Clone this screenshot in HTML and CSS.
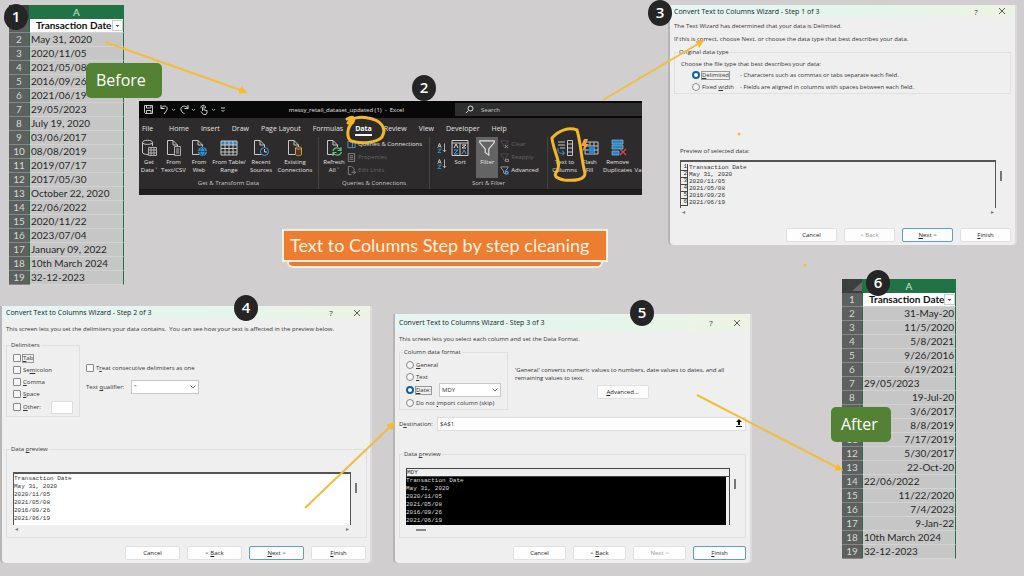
FILE: index.html
```html
<!DOCTYPE html>
<html lang="en">
<head>
<meta charset="utf-8">
<title>Text to Columns Step by step cleaning</title>
<link rel="stylesheet" href="styles.css">
</head>
<body>
<svg class="defs" aria-hidden="true">
  <symbol id="i-doc" viewBox="0 0 18 18"><path d="M9 15.500H2.500V1.500H8L12.500 6V8M8 1.500V6H12.500" fill="none" stroke="#c8c8c8"/></symbol>
  <symbol id="i-close" viewBox="0 0 8 8"><path d="M1 1L7 7M7 1L1 7" fill="none" stroke="#333" stroke-width=".8"/></symbol>
  <symbol id="i-chev" viewBox="0 0 8 8"><path d="M1.500 2.500L4 5L6.500 2.500" fill="none" stroke="#555" stroke-width=".8"/></symbol>
  <symbol id="i-drop" viewBox="0 0 9 9"><path d="M2.500 4H6.500L4.500 6Z" fill="#555"/></symbol>
  <symbol id="i-az" viewBox="0 0 12 13"><path d="M1 6L3 1L5 6M2 4.500H4" fill="none" stroke="#ddd"/><path d="M1 8H5L1 12H5" fill="none" stroke="#4c9ad4"/><path d="M9 1V11M7 9L9 11L11 9" fill="none" stroke="#ccc"/></symbol>
  <symbol id="i-funnel" viewBox="0 0 20 20"><path d="M2 2H18V4L12 11V18L8 15V11L2 4Z" fill="none" stroke="currentColor" stroke-width="1.300"/></symbol>
</svg>
<main class="slide">
  <div class="row row-top">
    <section class="step sheet-step">
      <table class="sheet">
        <thead><tr><th></th><th class="col">A</th></tr></thead>
        <tbody>
          <tr class="field"><th>1</th><td><b>Transaction Date</b><button class="filter-btn" aria-label="Filter"><svg width="9" height="9"><use href="#i-drop"/></svg></button></td></tr>
          <tr><th>2</th><td>May 31, 2020</td></tr>
          <tr><th>3</th><td>2020/11/05</td></tr>
          <tr><th>4</th><td>2021/05/08</td></tr>
          <tr><th>5</th><td>2016/09/26</td></tr>
          <tr><th>6</th><td>2021/06/19</td></tr>
          <tr><th>7</th><td>29/05/2023</td></tr>
          <tr><th>8</th><td>July 19, 2020</td></tr>
          <tr><th>9</th><td>03/06/2017</td></tr>
          <tr><th>10</th><td>08/08/2019</td></tr>
          <tr><th>11</th><td>2019/07/17</td></tr>
          <tr><th>12</th><td>2017/05/30</td></tr>
          <tr><th>13</th><td>October 22, 2020</td></tr>
          <tr><th>14</th><td>22/06/2022</td></tr>
          <tr><th>15</th><td>2020/11/22</td></tr>
          <tr><th>16</th><td>2023/07/04</td></tr>
          <tr><th>17</th><td>January 09, 2022</td></tr>
          <tr><th>18</th><td>10th March 2024</td></tr>
          <tr><th>19</th><td>32-12-2023</td></tr>
        </tbody>
      </table>
      <span class="badge badge-1">1</span>
      <span class="tag tag-before">Before</span>
    </section>

    <div class="middle">
      <section class="step">
        <div class="ribbon">
          <div class="app-bar">
            <div class="quick">
              <svg width="11" height="11" viewBox="0 0 11 11"><path d="M1.500 1.500H9.500V9.500H2.500L1.500 8.500ZM3.500 1.500V4H8V1.500M3.500 9.500V6.500H8V9.500" fill="none" stroke="#ddd" stroke-width=".9"/></svg>
              <svg width="18" height="11" viewBox="0 0 18 11"><path d="M2 1V4.500H5.500M2 4.500C5 0 9 2.500 8 5.500C7.500 7 6 8.500 5 10" fill="none" stroke="#ddd"/><path d="M13 5L14.500 6.500L16 5" fill="none" stroke="#aaa"/></svg>
              <svg width="18" height="11" viewBox="0 0 18 11"><path d="M9 1V4.500H5.500M9 4.500C6 0 1 2.500 2 6C2.500 8 4 9 5.500 9.500" fill="none" stroke="#ddd"/><path d="M13 5L14.500 6.500L16 5" fill="none" stroke="#aaa"/></svg>
              <svg width="18" height="11" viewBox="0 0 18 11"><path d="M3.500 7V3.500C3.500 2.500 5 2.500 5 3.500V6L8 6.500V9L7 10.500H4.500L2 7.500M2 4C1 1 7 0 6.500 4" fill="none" stroke="#ddd" stroke-width=".9"/><path d="M13 5L14.500 6.500L16 5" fill="none" stroke="#aaa"/></svg>
              <svg width="8" height="11" viewBox="0 0 8 11"><path d="M2 4H6M2.500 6L4 7.500L5.500 6" fill="none" stroke="#ccc"/></svg>
            </div>
            <span class="doc-name">messy_retail_dataset_updated (1) &nbsp;- &nbsp;Excel</span>
            <label class="search"><svg width="9" height="9" viewBox="0 0 9 9"><circle cx="5.500" cy="3.500" r="2.500" fill="none" stroke="#ddd"/><path d="M3.500 5.500L1 8" stroke="#ddd"/></svg><input type="text" placeholder="Search" aria-label="Search"></label>
          </div>
          <nav class="tabs">
            <a href="#">File</a><a href="#">Home</a><a href="#">Insert</a><a href="#">Draw</a><a href="#">Page Layout</a><a href="#">Formulas</a><a href="#" class="on">Data</a><a href="#">Review</a><a href="#">View</a><a href="#">Developer</a><a href="#">Help</a>
          </nav>
          <div class="tools">
            <div class="group g-get">
              <div class="items">
                <button class="tool w20"><svg viewBox="0 0 18 18"><path d="M2.500 3.500V13C2.500 15 5 15.500 8 15.500M12.500 3.500V7M2.500 3.500C2.500 .5 12.500 .5 12.500 3.500C12.500 6 2.500 6 2.500 3.500" fill="none" stroke="#c8c8c8"/><path d="M8.500 8.500H16.500V16.500H8.500ZM8.500 11H16.500M8.500 14H16.500M11 8.500V16.500M14 8.500V16.500" fill="#333" stroke="#bbb" stroke-width=".9"/></svg><span>Get<br>Data ˅</span></button>
                <button class="tool w29"><svg viewBox="0 0 18 18"><use href="#i-doc"/><path d="M9.500 7.500H15.500V16.500H9.500ZM11 10H14M11 12H14M11 14H14" fill="#333" stroke="#bbb" stroke-width=".9"/></svg><span>From<br>Text/CSV</span></button>
                <button class="tool w22"><svg viewBox="0 0 18 18"><use href="#i-doc"/><circle cx="12.500" cy="12.500" r="4.500" fill="#3b8fd0"/><path d="M8 12.500H17M12.500 8C9 11 9 14 12.500 17C16 14 16 11 12.500 8" fill="none" stroke="#1e3d55" stroke-width=".8"/></svg><span>From<br>Web</span></button>
                <button class="tool w38"><svg viewBox="0 0 18 18"><path d="M1 2H17V6H1Z" fill="#2e86c8"/><path d="M1 2H17V16H1ZM1 6H17M1 9.500H17M1 13H17M5 2V16M9 2V16M13 2V16" fill="none" stroke="#c8c8c8"/></svg><span>From Table/<br>Range</span></button>
                <button class="tool w26"><svg viewBox="0 0 18 18"><use href="#i-doc"/><circle cx="12.500" cy="12.500" r="4" fill="#2c2b2b" stroke="#4a9bd6"/><path d="M12.500 10V13H15" fill="none" stroke="#ccc"/></svg><span>Recent<br>Sources</span></button>
                <button class="tool w42"><svg viewBox="0 0 18 18"><use href="#i-doc"/><path d="M9.500 9V15.500C9.500 17 15.500 17 15.500 15.500V9C15.500 7.500 9.500 7.500 9.500 9C9.500 10.500 15.500 10.500 15.500 9" fill="#4c3a27" stroke="#d59a56"/></svg><span>Existing<br>Connections</span></button>
              </div>
              <div class="group-name">Get &amp; Transform Data</div>
            </div>
            <div class="group g-query">
              <div class="items">
                <button class="tool w26"><svg viewBox="0 0 18 18"><use href="#i-doc"/><path d="M8 12C9 8 14 8 15.500 11M16 8V11.500H12.500M16.500 13C15 17 10 17 8.500 14M8 17V13.500H11.500" fill="none" stroke="#5fbf7d" stroke-width="1.200"/></svg><span>Refresh<br>All ˅</span></button>
                <div class="list">
                  <button><svg viewBox="0 0 10 10"><path d="M1 1.500H6V8.500H1ZM6 3H9V8.500H6" fill="none" stroke="#5a9fd0"/></svg>Queries &amp; Connections</button>
                  <button disabled><svg viewBox="0 0 10 10"><path d="M1.500 .5H8.500V9.500H1.500ZM3 3H7M3 5H7M3 7H7" fill="none" stroke="#888"/></svg>Properties</button>
                  <button disabled><svg viewBox="0 0 10 10"><path d="M5 9.500H1.500V.5H5L8 3V5M5 7H9.500M7 5.500L9.500 7L7 9" fill="none" stroke="#888"/></svg>Edit Links</button>
                </div>
              </div>
              <div class="group-name">Queries &amp; Connections</div>
            </div>
            <div class="group g-sort">
              <div class="items">
                <div class="az"><button aria-label="Sort A to Z"><svg viewBox="0 0 12 13"><use href="#i-az"/></svg></button><button aria-label="Sort Z to A"><svg viewBox="0 0 12 13"><use href="#i-az"/></svg></button></div>
                <button class="tool w22"><svg viewBox="0 0 18 18"><path d="M1 1.500H17V16.500H1ZM1 4H17M9 4V16.500" fill="none" stroke="#ccc"/><path d="M3 9L5 5L7 9M11 6H15L11 9H15" fill="none" stroke="#ddd"/><path d="M3 11H7L3 15H7M11 15L13 11L15 15" fill="none" stroke="#4c9ad4"/></svg><span>Sort</span></button>
                <button class="tool filter"><svg viewBox="0 0 20 20"><use href="#i-funnel"/></svg><span>Filter</span></button>
                <div class="list">
                  <button disabled><svg viewBox="0 0 20 20"><use href="#i-funnel"/><path d="M11 11L18 18M18 11L11 18" stroke="#999" stroke-width="2"/></svg>Clear</button>
                  <button disabled><svg viewBox="0 0 20 20"><use href="#i-funnel"/><path d="M12 14H19V19H12Z" fill="none" stroke="#999" stroke-width="2"/></svg>Reapply</button>
                  <button><svg viewBox="0 0 20 20"><use href="#i-funnel"/><circle cx="15" cy="15" r="3" fill="none" stroke="#4c9ad4" stroke-width="3"/></svg>Advanced</button>
                </div>
              </div>
              <div class="group-name">Sort &amp; Filter</div>
            </div>
            <div class="group g-data">
              <div class="items">
                <button class="tool w28"><svg viewBox="0 0 18 18"><path d="M11.500 1.500H16.500V16.500H11.500ZM11.500 5H16.500M11.500 9H16.500M11.500 13H16.500M2 3H9M2 6H9M4 9H9" fill="none" stroke="#c8c8c8"/><path d="M2 9C1 15 5 14.500 8 14M6 11.500L8.500 14L6 16.500" fill="none" stroke="#4a9bd6"/></svg><span>Text to<br>Columns</span></button>
                <button class="tool w22"><svg viewBox="0 0 18 18"><path d="M4 3H17V15H4ZM4 7H17M4 11H17M9 3V15M13 3V15" fill="none" stroke="#b8c8d4"/><path d="M8 7H13V15H8Z" fill="#2e86c8"/><path d="M3 0H7L5 5H8L1 13L3 7H0Z" fill="#efa040"/></svg><span>Flash<br>Fill</span></button>
                <button class="tool w34"><svg viewBox="0 0 18 18"><path d="M3 1H14V5H3ZM3 6H14V10H3ZM3 12H10V16H3Z" fill="#2586cb" stroke="#8bb9d8" stroke-width=".7"/><path d="M11 10L17 16M17 10L11 16" stroke="#d84a50" stroke-width="1.300"/></svg><span>Remove<br>Duplicates</span></button>
                <button class="tool w7"><span>Va</span></button>
              </div>
            </div>
          </div>
          <div class="ribbon-foot"></div>
        </div>
        <span class="badge badge-2">2</span>
        <svg class="ink" viewBox="0 0 503 94" preserveAspectRatio="none" aria-hidden="true">
          <path d="M208 18C214 15 216 16 214 21C208 26 207 36 212 40C222 43 238 42 243 36C248 27 242 19 229 17C221 15 212 17 209 22" />
          <path d="M413 37C420 29 430 26 438 29C442 42 442 57 446 72C446 79 436 80 425 79C417 77 414 75 418 70C423 61 414 50 413 37Z"/>
        </svg>
      </section>
      <h1 class="headline"><span>Text to Columns Step by step cleaning</span></h1>
    </div>

    <section class="step dialog d1">
      <header class="bar"><h2>Convert Text to Columns Wizard - Step 1 of 3</h2><button aria-label="Help">?</button><button aria-label="Close"><svg width="8" height="8"><use href="#i-close"/></svg></button></header>
      <div class="body">
        <p class="say">The Text Wizard has determined that your data is Delimited.</p>
        <p class="say">If this is correct, choose Next, or choose the data type that best describes your data.</p>
        <fieldset class="box types">
          <legend>Original data type</legend>
          <p>Choose the file type that best describes your data:</p>
          <div class="choice"><label><input type="radio" name="t" checked><span class="focus"><u>D</u>elimited</span></label><span>- Characters such as commas or tabs separate each field.</span></div>
          <div class="choice"><label><input type="radio" name="t"><span>Fixed <u>w</u>idth</span></label><span>- Fields are aligned in columns with spaces between each field.</span></div>
        </fieldset>
        <p class="preview-name">Preview of selected data:</p>
        <div class="preview">
          <ol class="lines numbered"><li><i>1</i>Transaction Date</li><li><i>2</i>May 31, 2020</li><li><i>3</i>2020/11/05</li><li><i>4</i>2021/05/08</li><li><i>5</i>2016/09/26</li><li><i>6</i>2021/06/19</li></ol>
          <span class="thumb"></span>
          <div class="hscroll"><span>◂</span><span>▸</span></div>
        </div>
        <footer class="actions"><button>Cancel</button><button disabled>&lt; Back</button><button class="main"><u>N</u>ext &gt;</button><button><u>F</u>inish</button></footer>
      </div>
      <span class="badge badge-3">3</span>
    </section>
  </div>

  <div class="row row-bottom">
    <section class="step dialog d2">
      <header class="bar"><h2>Convert Text to Columns Wizard - Step 2 of 3</h2><button aria-label="Help">?</button><button aria-label="Close"><svg width="8" height="8"><use href="#i-close"/></svg></button></header>
      <div class="body">
        <p class="say">This screen lets you set the delimiters your data contains.&nbsp; You can see how your text is affected in the preview below.</p>
        <div class="options">
          <fieldset class="box delims">
            <legend>Delimiters</legend>
            <label><input type="checkbox"><span class="focus"><u>T</u>ab</span></label>
            <label><input type="checkbox"><span>Se<u>m</u>icolon</span></label>
            <label><input type="checkbox"><span><u>C</u>omma</span></label>
            <label><input type="checkbox"><span><u>S</u>pace</span></label>
            <div class="other"><label><input type="checkbox"><span><u>O</u>ther:</span></label><input type="text" class="field-box" aria-label="Other delimiter"></div>
          </fieldset>
          <div class="treat">
            <label><input type="checkbox"><span>T<u>r</u>eat consecutive delimiters as one</span></label>
            <div class="qualifier"><label for="q">Text <u>q</u>ualifier:</label><span class="picker"><select id="q"><option>"</option></select><svg width="8" height="8"><use href="#i-chev"/></svg></span></div>
          </div>
        </div>
        <fieldset class="box data">
          <legend>Data <u>p</u>review</legend>
          <div class="preview">
            <ol class="lines white"><li>Transaction Date</li><li>May 31, 2020</li><li>2020/11/05</li><li>2021/05/08</li><li>2016/09/26</li><li>2021/06/19</li></ol>
            <span class="thumb"></span>
            <div class="hscroll"><span>◂</span><span>▸</span></div>
          </div>
        </fieldset>
        <footer class="actions"><button>Cancel</button><button>&lt; <u>B</u>ack</button><button class="main"><u>N</u>ext &gt;</button><button><u>F</u>inish</button></footer>
      </div>
      <span class="badge badge-4">4</span>
    </section>

    <section class="step dialog d3">
      <header class="bar"><h2>Convert Text to Columns Wizard - Step 3 of 3</h2><button aria-label="Help">?</button><button aria-label="Close"><svg width="8" height="8"><use href="#i-close"/></svg></button></header>
      <div class="body">
        <p class="say">This screen lets you select each column and set the Data Format.</p>
        <div class="options">
          <fieldset class="box formats">
            <legend>Column data format</legend>
            <label><input type="radio" name="f"><span><u>G</u>eneral</span></label>
            <label><input type="radio" name="f"><span><u>T</u>ext</span></label>
            <div class="date"><label><input type="radio" name="f" checked><span class="focus"><u>D</u>ate:</span></label><span class="picker"><select aria-label="Date order"><option>MDY</option></select><svg width="8" height="8"><use href="#i-chev"/></svg></span></div>
            <label><input type="radio" name="f"><span>Do not <u>i</u>mport column (skip)</span></label>
          </fieldset>
          <div class="explain">
            <p>'General' converts numeric values to numbers, date values to dates, and all remaining values to text.</p>
            <button class="push"><u>A</u>dvanced...</button>
          </div>
        </div>
        <div class="dest"><label for="dest">D<u>e</u>stination:</label><span class="dest-field"><input id="dest" type="text" value="$A$1"><button aria-label="Collapse dialog"><svg width="8" height="8" viewBox="0 0 8 8"><path d="M4 0L7 3H5V6H3V3H1ZM1 7H7V8H1Z" fill="#111"/></svg></button></span></div>
        <fieldset class="box data">
          <legend>Data <u>p</u>review</legend>
          <div class="preview">
            <div class="column"><div class="column-head">MDY</div><ol class="lines black"><li>Transaction Date</li><li>May 31, 2020</li><li>2020/11/05</li><li>2021/05/08</li><li>2016/09/26</li><li>2021/06/19</li></ol></div>
            <span class="thumb"></span>
            <div class="hscroll"><span class="hthumb"></span></div>
          </div>
        </fieldset>
        <footer class="actions"><button>Cancel</button><button>&lt; <u>B</u>ack</button><button disabled>Next &gt;</button><button class="main"><u>F</u>inish</button></footer>
      </div>
      <span class="badge badge-5">5</span>
    </section>

    <section class="step sheet-step after">
      <table class="sheet">
        <thead><tr><th class="corner"><svg width="10" height="9" viewBox="0 0 10 9"><path d="M10 0V9H0Z" fill="#6b6b6b"/></svg></th><th class="col">A</th></tr></thead>
        <tbody>
          <tr class="field"><th>1</th><td><b>Transaction Date</b><button class="filter-btn" aria-label="Filter"><svg width="9" height="9"><use href="#i-drop"/></svg></button></td></tr>
          <tr><th>2</th><td class="num">31-May-20</td></tr>
          <tr><th>3</th><td class="num">11/5/2020</td></tr>
          <tr><th>4</th><td class="num">5/8/2021</td></tr>
          <tr><th>5</th><td class="num">9/26/2016</td></tr>
          <tr><th>6</th><td class="num">6/19/2021</td></tr>
          <tr><th>7</th><td>29/05/2023</td></tr>
          <tr><th>8</th><td class="num">19-Jul-20</td></tr>
          <tr><th>9</th><td class="num">3/6/2017</td></tr>
          <tr><th>10</th><td class="num">8/8/2019</td></tr>
          <tr><th>11</th><td class="num">7/17/2019</td></tr>
          <tr><th>12</th><td class="num">5/30/2017</td></tr>
          <tr><th>13</th><td class="num">22-Oct-20</td></tr>
          <tr><th>14</th><td>22/06/2022</td></tr>
          <tr><th>15</th><td class="num">11/22/2020</td></tr>
          <tr><th>16</th><td class="num">7/4/2023</td></tr>
          <tr><th>17</th><td class="num">9-Jan-22</td></tr>
          <tr><th>18</th><td>10th March 2024</td></tr>
          <tr><th>19</th><td>32-12-2023</td></tr>
        </tbody>
      </table>
      <span class="badge badge-6">6</span>
      <span class="tag tag-after">After</span>
    </section>
  </div>

  <svg class="arrows" viewBox="0 0 1024 576" preserveAspectRatio="none" aria-hidden="true">
    <defs><marker id="tip" viewBox="0 0 6 6" refX="5" refY="3" markerWidth="4" markerHeight="4" orient="auto"><path d="M0 0L6 3L0 6Z" fill="#f5bd2b" stroke="none"/></marker></defs>
    <path d="M105 42L246 92" marker-end="url(#tip)"/>
    <path d="M603 100L703 41" marker-end="url(#tip)"/>
    <path d="M305 508L394 423" marker-end="url(#tip)"/>
    <path d="M697 395L842 470" marker-end="url(#tip)"/>
    <circle cx="739" cy="134" r="1.500"/><circle cx="805" cy="265" r="1.500"/>
  </svg>
</main>
</body>
</html>
```
FILE: styles.css
```css
* { box-sizing: border-box; }
body { margin: 0; background: #d0cecf; font-family: "Open Sans", "Noto Sans", sans-serif; font-size: 6px; color: #333; }
h1, h2, p, ol, fieldset { margin: 0; padding: 0; }
ol { list-style: none; }
button, input, select { font: inherit; color: inherit; margin: 0; padding: 0; }
button { white-space: nowrap; }
.defs { display: none; }
.slide { position: relative; min-height: 100vh; overflow: hidden; }
.row { display: flex; align-items: flex-start; }
.row-top { padding: 5px 9px 0; }
.row-bottom { padding: 0 68px 0 2px; margin-top: -6px; }
.step { position: relative; }
.sheet-step { flex: 0 0 115px; }

/* worksheets */
.sheet { width: 100%; border-collapse: separate; border-spacing: 0; table-layout: fixed; font-family: Lato, sans-serif; font-size: 10px; line-height: 13px; color: #262626; }
.sheet tr { height: 14px; }
.sheet thead tr { height: 14px; }
.sheet th { width: 20px; padding: 0; background: #5c605e; color: #d5d8d6; font-weight: 400; text-align: center; border-bottom: 1px solid #858886; }
.sheet thead th { background: #3b3f3d; border: 0; }
.sheet thead .col { width: auto; background: #217346; color: #cde5d7; }
.sheet .corner { text-align: right; }
.corner svg { display: block; margin-left: auto; }
.sheet td { padding: 0 1px; background: #c6c6c6; border-bottom: 1px solid #d3d3d3; border-left: 1px solid #217346; border-right: 1px solid #217346; white-space: nowrap; }
.sheet .num { text-align: right; }
.sheet .field td { position: relative; padding-left: 6px; background: #fff; color: #111; }
.after { flex-basis: 114px; }
.filter-btn { position: absolute; right: 0; top: 1px; width: 11px; height: 11px; border: 1px solid #ccc; background: #fff; }
.filter-btn svg { display: block; }

/* markers */
.badge { position: absolute; width: 24px; height: 26px; border-radius: 50%; background: #252525; color: #fff; font-size: 15px; font-weight: 600; line-height: 25px; text-align: center; }
.badge-1 { left: -5px; top: -1px; }
.badge-2 { left: 273px; top: -26px; }
.badge-3 { left: -22px; top: -5px; }
.badge-4 { left: 232px; top: -11px; }
.badge-5 { left: 235px; top: -14px; }
.badge-6 { left: 24px; top: -9px; }
.tag { position: absolute; padding: 0 10px; border-radius: 5px; background: #548235; color: #fff; font-size: 16px; line-height: 35px; }
.tag-before { left: 77px; top: 58px; width: 76px; }
.tag-after { left: -11px; top: 128px; width: 60px; }

.middle { flex: 503 1 0; margin: 96px 28px 0 15px; min-width: 0; }
.headline { position: relative; width: 326px; margin: 34px 34px 0 auto; font: 400 18px/26px Lato, sans-serif; color: #fff3e2; }
.headline::before { content: ""; position: absolute; inset: auto 5px -6px; height: 14px; border: 2px solid #fdeedd; border-radius: 0 0 6px 6px; background: #df7f3c; }
.headline span { position: relative; display: block; padding: 1px 6px 2px; border: 2px solid #fdeedd; background: #ed7d31; white-space: nowrap; }

/* ribbon */
.ribbon { background: #2d2b2b; color: #e2e2e2; overflow: hidden; }
.ribbon button { border: 0; background: none; }
.app-bar { display: flex; align-items: center; height: 17px; background: #080808; }
.quick { display: flex; align-items: center; gap: 2px; padding-left: 4px; flex: 1; }
.quick svg:first-child { margin-right: 3px; }
.doc-name { margin-right: 51px; }
.search { display: flex; align-items: center; gap: 7px; flex: 0 0 187px; height: 13px; padding-left: 10px; background: #2f2e2e; }
.search input { flex: 1; min-width: 0; border: 0; background: none; }
.search input::placeholder { color: #ccc; opacity: 1; }
.tabs { display: flex; gap: 12px; padding: 5px 3px 0; height: 19px; font-size: 7px; line-height: 11px; white-space: nowrap; }
.tabs a { color: inherit; text-decoration: none; }
.tabs a:first-child { margin-right: 4px; }
.tabs .on { height: 13px; border-bottom: 2px solid #fff; color: #fff; font-weight: 700; }
.tools { display: flex; }
.group { flex: 1 1 0; min-width: 0; border-left: 1px solid #454343; }
.g-get { flex-grow: 180; border-left: 0; }
.g-query { flex-grow: 111; }
.g-sort { flex-grow: 117; }
.g-data { flex-grow: 95; }
.items { display: flex; height: 41px; }
.tool { display: flex; flex: none; flex-direction: column; align-items: center; padding: 2px 0 0; line-height: 8px; text-align: center; }
.tool svg { display: block; width: 18px; height: 18px; margin-bottom: 1px; }
.w7 { width: 7px; padding-top: 29px; }
.w20 { width: 20px; } .w22 { width: 22px; } .w26 { width: 26px; } .w28 { width: 28px; } .w29 { width: 29px; }
.w34 { width: 34px; } .w38 { width: 38px; } .w42 { width: 42px; }
.g-query .items { padding-left: 2px; }
.g-data .items { padding-left: 3px; }
.ribbon .filter { width: 22px; margin: 0 2px 0 5px; background: #656464; }
.list { display: flex; flex-direction: column; gap: 4px; padding-top: 3px; }
.list button { display: flex; align-items: center; gap: 2px; line-height: 9px; }
.list button:disabled { color: #666; }
.list svg { width: 9px; height: 9px; }
.az { display: flex; flex-direction: column; gap: 4px; padding: 5px 2px 0 7px; }
.az svg { display: block; width: 10px; height: 12px; }
.group-name { height: 11px; line-height: 10px; text-align: center; color: #c8c8c8; }
.ribbon-foot { height: 6px; background: #201f1f; border-top: 1px solid #191919; }
.ink { position: absolute; inset: 0; width: 100%; height: 100%; overflow: visible; fill: none; stroke: #f2b827; stroke-width: 3; stroke-linecap: round; stroke-linejoin: round; }

/* wizard dialogs */
.dialog { background: #efefef; border-radius: 0 0 4px 4px; box-shadow: -2px 0 0 #b7b6b7, 2px 0 0 #dcdbdc; min-width: 0; }
.d1 { flex: 345 1 0; }
.d2 { flex: 368 1 0; margin: 27px 25px 0 0; }
.d3 { flex: 355 1 0; margin: 35px 92px 0 0; }
.bar { display: flex; align-items: center; height: 13px; padding: 0 9px 0 4px; background: linear-gradient(90deg, #e6f5f5, #e4f5ec 55%, #edf3e4); }
.bar h2 { flex: 1; font-size: 7px; font-weight: 400; line-height: 9px; color: #222; }
.bar button { border: 0; background: none; display: flex; align-items: center; justify-content: center; width: 8px; margin-left: 18px; font-size: 8px; line-height: 9px; }
.d1 .bar { height: 12px; }
.d3 .bar { height: 17px; }
.body { padding: 0 4px 3px; }
.say { line-height: 12px; margin-top: 1px; white-space: nowrap; }
.d1 .bar + .body { padding-top: 2px; }
.box { border: 1px solid #e0e0e0; min-width: 0; }
.box legend { margin-left: -3px; padding: 0 1px; line-height: 8px; }
label { display: flex; align-items: center; gap: 2px; white-space: nowrap; }
input[type=radio], input[type=checkbox] { appearance: none; flex: none; width: 8px; height: 8px; border: 1px solid #888; background: #f7f7f7; border-radius: 1px; }
input[type=radio] { border-radius: 50%; }
input[type=radio]:checked { border: 2px solid #14609f; background: #fff; }
.focus { outline: 1px solid #999; line-height: 7px; }
.types { margin-top: 3px; padding: 3px 6px 0; }
.types p { line-height: 10px; }
.choice { display: flex; align-items: center; height: 12px; padding-left: 11px; }
.choice label { width: 48px; }
.preview-name { margin: 53px 0 5px 6px; line-height: 8px; }
.preview { display: grid; grid-template-columns: 1fr 15px; }
.d1 .preview { padding-left: 6px; }
.thumb { width: 2px; height: 10px; margin: 11px 0 0 4px; background: #777; }
.lines { border: 1px solid #555; border-bottom: 0; font: 6px/7px "Liberation Mono", monospace; color: #333; padding: 2px 0 3px; }
.numbered { border-top-width: 2px; padding: 2px 0 2px; }
.numbered li { display: flex; }
.lines i { flex: none; width: 7px; height: 7px; margin-right: 1px; border: solid #444; border-width: 0 1px 1px 0; font-style: normal; text-align: right; line-height: 6px; }
.white { background: #fff; line-height: 8px; border-top-width: 2px; padding: 1px 0 2px; }
.black { background: #000; color: #ddd; line-height: 8px; padding: 0; margin-right: 3px; border: 0; }
.column { border-right: 1px solid #444; }
.column-head { border: 1px solid #444; border-right: 0; font: 6px/7px "Liberation Mono", monospace; }
.hscroll { display: flex; justify-content: space-between; padding: 0 2px; height: 10px; line-height: 9px; color: #777; }
.hthumb { width: 10px; height: 2px; margin: 4px 0 0 8px; background: #888; }
.actions { display: flex; justify-content: flex-end; gap: 7px; margin-top: 10px; }
.actions button, .push { flex: 0 0 51px; height: 14px; border: 1px solid #e0e0e0; border-radius: 2px; background: #fdfdfd; color: #222; }
.actions button:disabled { color: #999; }
.actions .main { border-color: #5b9fcb; }
.d2 .actions, .d3 .actions { margin-top: 8px; }
.d2 .actions button { flex-basis: 55px; }
.d3 .actions button { flex-basis: 53px; }
.options { display: flex; }
.d2 .say { margin-top: 4px; }
.d2 .options { margin-top: 6px; }
.delims { flex: 0 0 74px; padding: 3px 6px 2px; }
.delims label { height: 12px; }
.other { display: flex; align-items: center; justify-content: space-between; height: 14px; }
.field-box { width: 22px; height: 13px; border: 1px solid #ddd; background: #fff; }
.treat { padding: 23px 0 0 6px; }
.qualifier { display: flex; align-items: center; gap: 5px; margin-top: 8px; }
.qualifier label { width: 40px; gap: 0; white-space: pre; }
.picker { position: relative; display: block; width: 68px; height: 14px; }
.picker select { appearance: none; width: 100%; height: 100%; padding-left: 2px; border: 1px solid #c8c8c8; border-radius: 0; background: #fff; }
.picker svg { position: absolute; right: 2px; top: 3px; }
.data { padding: 19px 0 2px 6px; }
.d2 .data { margin-top: 28px; margin-right: -1px; }
.d3 .say { margin-top: 2px; }
.d3 .options { margin-top: 3px; }
.formats { flex: 0 0 109px; padding: 3px 6px 0; }
.formats label { height: 12px; }
.date { display: flex; align-items: center; justify-content: space-between; height: 14px; }
.date .picker { width: 62px; }
.explain { flex: 1; padding: 18px 16px 0 7px; line-height: 8px; }
.push { display: block; width: 52px; margin: 3px auto 0; position: relative; }
.dest { display: flex; align-items: center; justify-content: space-between; margin-top: 7px; }
.dest label { gap: 0; }
.dest-field { display: flex; align-items: center; flex: 0 0 309px; height: 14px; border: 1px solid #ddd; background: #fff; }
.dest-field input { flex: 1; min-width: 0; border: 0; padding-left: 2px; background: none; }
.dest-field button { width: 13px; height: 12px; border: 0; background: none; }
.d3 .data { margin-top: 19px; padding-top: 10px; }

.arrows { position: absolute; inset: 0; width: 100%; height: 100%; pointer-events: none; fill: #f2bd3a; stroke: #f2bd3a; stroke-width: 2; }
.arrows circle { stroke: none; }
```
